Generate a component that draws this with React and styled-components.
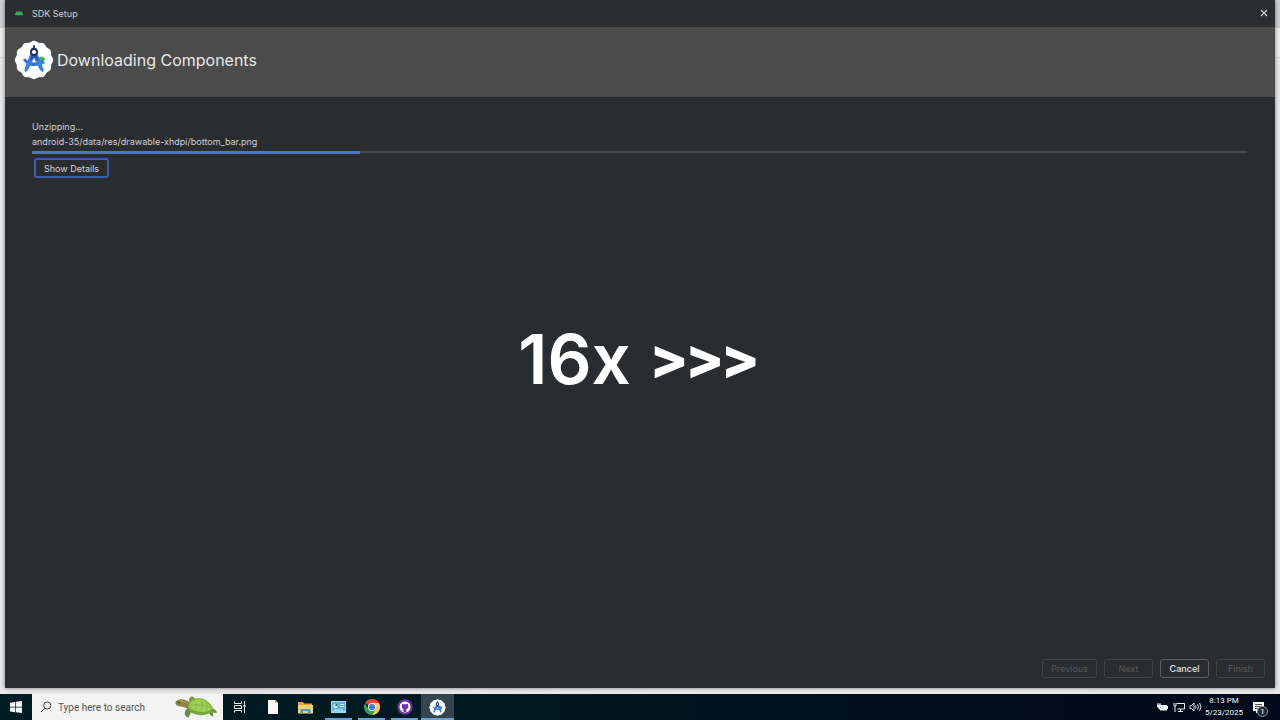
import React, { useState } from 'react';
import styled, { createGlobalStyle } from 'styled-components';

const taskbarApps = [
  { id: 'tasks', label: 'Task View', icon: <TaskViewIcon /> },
  { id: 'document', label: 'Document', icon: <DocumentIcon /> },
  { id: 'explorer', label: 'File Explorer', icon: <FolderIcon /> },
  { id: 'control', label: 'Control Panel', icon: <PanelIcon />, running: true },
  { id: 'chrome', label: 'Google Chrome', icon: <ChromeIcon />, running: true },
  { id: 'github', label: 'GitHub Desktop', icon: <GithubIcon />, running: true },
  { id: 'studio', label: 'Android Studio', icon: <StudioIcon size={17} />, running: true, active: true },
];

const App = () => {
  const [query, setQuery] = useState('');

  return (
    <>
      <GlobalStyle />
      <Desktop>
        <Workspace>
          <SetupWindow>
            <TitleBar>
              <AndroidIcon />
              <WindowTitle>SDK Setup</WindowTitle>
              <CloseButton type="button" aria-label="Close">
                <svg width="8" height="8" viewBox="0 0 8 8">
                  <path d="M1 1l6 6M7 1L1 7" stroke="#d4d6d8" strokeWidth="1.1" />
                </svg>
              </CloseButton>
            </TitleBar>

            <Header>
              <StudioIcon size={40} />
              <Heading>Downloading Components</Heading>
            </Header>

            <Content>
              <StatusText>Unzipping...</StatusText>
              <StatusText>android-35/data/res/drawable-xhdpi/bottom_bar.png</StatusText>
              <Track role="progressbar" aria-label="Download progress" aria-valuenow={27}>
                <Bar />
              </Track>
              <DetailsButton type="button">Show Details</DetailsButton>
            </Content>

            <Footer>
              <FooterButton type="button" $width={55} disabled>Previous</FooterButton>
              <FooterButton type="button" $width={49} disabled>Next</FooterButton>
              <FooterButton type="button" $width={49}>Cancel</FooterButton>
              <FooterButton type="button" $width={49} disabled>Finish</FooterButton>
            </Footer>
          </SetupWindow>

          <SpeedOverlay>
            <span>16x</span>
            <Arrows>&gt;&gt;&gt;</Arrows>
          </SpeedOverlay>
        </Workspace>

        <Taskbar>
          <StartButton type="button" aria-label="Start">
            <svg width="12" height="12" viewBox="0 0 12 12" fill="#f2f6f6">
              <path d="M0 1.7l5.3-.8v4.8H0zM6 .8L12 0v5.7H6zM0 6.4h5.3v4.8L0 10.4zM6 6.4h6V12l-6-.8z" />
            </svg>
          </StartButton>
          <SearchBox>
            <svg width="12" height="12" viewBox="0 0 12 12" fill="none" stroke="#444" strokeWidth="1">
              <circle cx="7.3" cy="4.5" r="3.6" />
              <path d="M4.7 7.2L1 11" />
            </svg>
            <SearchInput
              aria-label="Search"
              placeholder="Type here to search"
              value={query}
              onChange={(e) => setQuery(e.target.value)}
            />
            <TurtleIcon />
          </SearchBox>
          {taskbarApps.map((app) => (
            <AppButton
              key={app.id}
              type="button"
              aria-label={app.label}
              $running={app.running}
              $active={app.active}
            >
              {app.icon}
            </AppButton>
          ))}
          <Tray>
            <TrayIcons>
              <BatteryIcon />
              <NetworkIcon />
              <VolumeIcon />
            </TrayIcons>
            <Clock>
              <span>8:13 PM</span>
              <span>5/23/2025</span>
            </Clock>
            <NotificationButton type="button" aria-label="Notifications">
              <svg width="14" height="13" viewBox="0 0 14 13">
                <path d="M1 1h11v9H6.500l-2.500 2.500V10H1z" fill="#f4f6f8" />
                <path d="M3 3.500h7M3 5.500h7M3 7.500h4" stroke="#1b2733" strokeWidth=".8" />
              </svg>
              <Badge>1</Badge>
            </NotificationButton>
          </Tray>
        </Taskbar>
      </Desktop>
    </>
  );
};

export default App;

function AndroidIcon() {
  return (
    <svg width="8" height="6" viewBox="0 0 8 6">
      <path d="M0 5.200a4 3.600 0 0 1 8 0z" fill="#3fae62" />
      <path d="M1.800 2.400L.9.800M6.200 2.400l.9-1.600" stroke="#3fae62" strokeWidth=".7" />
      <circle cx="2.500" cy="3.900" r=".4" fill="#24402f" />
      <circle cx="5.500" cy="3.900" r=".4" fill="#24402f" />
    </svg>
  );
}

function StudioIcon({ size }) {
  return (
    <svg width={size} height={size} viewBox="0 0 40 40">
      <g fill="#fdfefe">
        <circle cx="20" cy="20" r="18" />
        {[0, 30, 60, 90, 120, 150, 180, 210, 240, 270, 300, 330].map((angle) => (
          <circle key={angle} cx="20" cy="5.500" r="4.700" transform={`rotate(${angle} 20 20)`} />
        ))}
      </g>
      <path d="M24 18l3.500-1.500 2 .5 1.500 2-1 2 1 2.500-6 1.500z" fill="#3fae55" />
      <path d="M9 19.500l2.500-1c2 2.500 4.500 4 8.500 4 3.500 0 6-1 8-2.500l1 3c-2.500 2-5.500 3-9 3-5 0-9-2.500-11-6.500z" fill="#3473d6" />
      <path d="M16.800 12.500h6.400L29.500 29l-.5 3.500-3-2.500-6-12-6 12-3 2.500-.5-3.500z" fill="#3d7fe4" />
      <path d="M17.500 14h5l2 7.500L20 17.500l-4.500 4z" fill="#2458ad" />
      <path d="M19 5.500h2v2.200c1.900.5 3 2 3 4.100 0 2.400-1.800 4-4 4s-4-1.600-4-4c0-2.100 1.100-3.600 3-4.100z" fill="#1b2f55" />
      <circle cx="20" cy="12" r="2.100" fill="#fff" />
    </svg>
  );
}

function TurtleIcon() {
  return (
    <svg width="43" height="24" viewBox="0 0 43 24">
      <path d="M13 13c-3 2-4 4.500-3 7 1 1.500 2.500 3 4 2.500 0-3 2-5 4-7z" fill="#6f8c3c" />
      <path d="M14 7c-.5-3.500 1-5.500 4-5.500 2 1 2 3 2 5z" fill="#7f9c42" />
      <path d="M32 16c2 1.500 3 4 5 5.500 1.500 0 1.700-2 .5-4l4 .5c1-2-1.500-4-5.500-5z" fill="#728f3e" />
      <path d="M14 7C11 5 8 4 4.500 4.500 1.500 5 0 6.500.5 8.500c.5 2 2.500 3 5.500 3 2.500 0 4 1 8 2.500z" fill="#8a8644" />
      <path d="M3 6.500c2-1 5-.5 8 1.500" stroke="#b0a85c" fill="none" />
      <circle cx="4" cy="7.500" r=".9" fill="#383c1c" />
      <path d="M13 12c0-7 6-9.500 13-8.500 6 1 10 5 13 12-5 4.500-12 5.500-18 4-4-1.200-7.500-3.500-8-7.500z" fill="#79a63c" />
      <path d="M14 11c1-5.500 6-7.500 12-6.500 5 .5 8 4 11 9.500-4 3-9 3.500-14 2.500S15 14 14 11z" fill="#a0cf58" />
      <path d="M19 5.500l2.500 4.500-2 6M26 4.500l1.500 6-1.500 6.500M32 7.500l.5 4-2 5.500M14.500 10.500l7-.5 6 .5 5 1 4 2" stroke="#7dad43" strokeWidth=".7" fill="none" />
    </svg>
  );
}

function TaskViewIcon() {
  return (
    <svg width="12" height="12" viewBox="0 0 12 12" fill="none" stroke="#e6eeee" strokeWidth="1">
      <path d="M.5.500v2h7v-2M.5 11.500v-2h7v2M.5 4.500h7v3h-7zM10.500 0v12" />
      <path d="M9.500 5h2" strokeWidth="2" />
    </svg>
  );
}

function DocumentIcon() {
  return (
    <svg width="12" height="14" viewBox="0 0 12 14">
      <path d="M1 0h7l3 3v11H1z" fill="#f7f8f8" />
      <path d="M8 0v3h3z" fill="#bcc6c8" />
    </svg>
  );
}

function FolderIcon() {
  return (
    <svg width="15" height="13" viewBox="0 0 15 13">
      <path d="M0 1h5l1.500 1.500H14V12H0z" fill="#dba83b" />
      <path d="M0 4h15v8.500H0z" fill="#f0d272" />
      <path d="M2.500 12.500V8h10v4.500H10V10H5v2.500z" fill="#5599b5" />
    </svg>
  );
}

function PanelIcon() {
  return (
    <svg width="15" height="12" viewBox="0 0 15 12">
      <path d="M0 0h15v12H0z" fill="#9cd9f2" />
      <path d="M1 1h13v9H1z" fill="#5db2dc" />
      <circle cx="4.500" cy="5" r="2.300" fill="#bfe7f7" />
      <path d="M4.500 5V2.700A2.300 2.300 0 0 1 6.800 5z" fill="#246d9f" />
      <path d="M9 3.500h4M9 5.500h4M3 9h9" stroke="#d8f3fa" />
    </svg>
  );
}

function ChromeIcon() {
  return (
    <svg width="16" height="16" viewBox="0 0 16 16">
      <path d="M8 8L1.070 4A8 8 0 0 1 14.930 4z" fill="#df4636" />
      <path d="M8 8V0a8 8 0 0 1 6.930 4z" fill="#df4636" />
      <path d="M8 4h6.930A8 8 0 0 1 8 16l3.500-6z" fill="#f8ce45" />
      <path d="M1.070 4l3.430 6L8 12l3.500-2L8 16A8 8 0 0 1 1.070 4z" fill="#37a255" />
      <circle cx="8" cy="8" r="4" fill="#fff" />
      <circle cx="8" cy="8" r="3.100" fill="#3e7fe6" />
    </svg>
  );
}

function GithubIcon() {
  return (
    <svg width="16" height="16" viewBox="0 0 16 16">
      <circle cx="8" cy="8" r="7.700" fill="#68339c" />
      <circle cx="8" cy="8" r="5.500" fill="#fff" />
      <path d="M5 4.500l1.500.8h3l1.500-.8.300 2.500c0 2-.8 2.800-2 3v3H6.800v-1.500c-1.300.3-1.500-.6-2.200-1 1 0 1.200.5 2.200.3V10c-1.300-.2-2-1-2-3z" fill="#68339c" />
    </svg>
  );
}

function BatteryIcon() {
  return (
    <svg width="12" height="10" viewBox="0 0 12 10">
      <path d="M4 3h6v1h1v3h-1v1.500H3V6l1-1z" fill="#f2f4f7" />
      <path d="M1 1v2M3 1v2M0 3h4v1.500L3 5.500H1L0 4.500zM2 5v2h2" stroke="#f2f4f7" strokeWidth=".9" fill="#f2f4f7" />
    </svg>
  );
}

function NetworkIcon() {
  return (
    <svg width="12" height="11" viewBox="0 0 12 11" fill="none" stroke="#eef0f4">
      <path d="M3.500 1.500h8v5.500h-7M7.500 7v2.500M5 9.500h5M1 1v3h2V1M2 4v6" />
    </svg>
  );
}

function VolumeIcon() {
  return (
    <svg width="13" height="12" viewBox="0 0 13 12" fill="none" stroke="#eef0f4" strokeWidth=".9">
      <path d="M1 4.500h1.500L5 2v8L2.500 7.500H1zM6.500 4.500q1.200 1.500 0 3M8.500 3.300q2 2.700 0 5.400M10.500 2q3 4 0 8" />
    </svg>
  );
}

const GlobalStyle = createGlobalStyle`
  * {
    box-sizing: border-box;
  }
  body {
    margin: 0;
    font-family: Inter, sans-serif;
  }
  button, input {
    font-family: inherit;
    padding: 0;
    border: none;
  }
  svg {
    display: block;
    flex-shrink: 0;
  }
`;

const Desktop = styled.div`
  display: flex;
  flex-direction: column;
  min-height: 100vh;
  background: linear-gradient(#cdd1d4 0 28px, #ececec 28px 57px, #dadada 57px 58px, #e9e9e9 58px);
`;

const Workspace = styled.main`
  position: relative;
  flex: 1;
  display: flex;
  padding: 0 5px 6px;
`;

const SetupWindow = styled.section`
  flex: 1;
  display: flex;
  flex-direction: column;
  background: #2a2d30;
  color: #ced0d2;
  box-shadow: 0 0 4px rgba(0, 0, 0, 0.5);
`;

const TitleBar = styled.div`
  display: flex;
  align-items: center;
  gap: 9px;
  height: 27px;
  padding: 0 7px 1px 10px;
  font-size: 9px;
  background: #2a2e31;
`;

const WindowTitle = styled.span`
  flex: 1;
`;

const CloseButton = styled.button`
  display: flex;
  padding: 0;
  background: none;
`;

const Header = styled.header`
  display: flex;
  align-items: center;
  gap: 3px;
  height: 70px;
  padding: 0 9px 4px;
  background: #4b4b4b;
`;

const Heading = styled.h1`
  margin: 0;
  font-size: 16px;
  font-weight: 400;
  color: #e6e7e8;
`;

const Content = styled.div`
  flex: 1;
  padding: 22px 28px 0 27px;
`;

const StatusText = styled.p`
  margin: 0;
  font-size: 9px;
  line-height: 15px;
`;

const Track = styled.div`
  height: 2px;
  margin: 2px 0 5px;
  background: #484a4e;
`;

const Bar = styled.div`
  width: 27%;
  height: 3px;
  background: #4d75c9;
`;

const DetailsButton = styled.button`
  display: block;
  height: 20px;
  margin-left: 2px;
  padding: 0 8px;
  border: 2px solid #3c5da8;
  border-radius: 3px;
  background: #2a2d30;
  color: #d2d4d6;
  font-size: 9px;
`;

const Footer = styled.footer`
  display: flex;
  justify-content: flex-end;
  gap: 7px;
  padding: 0 10px 10px;
`;

const FooterButton = styled.button`
  width: ${({ $width }) => $width}px;
  height: 19px;
  border: 1px solid #5c5f63;
  border-radius: 3px;
  background: none;
  color: #e4e5e7;
  font-size: 9px;
  font-weight: 500;

  &:disabled {
    border-color: #414346;
    color: #55585b;
    font-weight: 400;
  }
`;

const SpeedOverlay = styled.div`
  position: absolute;
  inset: 0;
  display: flex;
  align-items: center;
  justify-content: center;
  gap: 20px;
  padding: 24px 4px 0 0;
  color: #fff;
  font-size: 69px;
  font-weight: 600;
  pointer-events: none;
`;

const Arrows = styled.span`
  font-family: Roboto, sans-serif;
  font-weight: 700;
`;

const Taskbar = styled.nav`
  display: flex;
  height: 26px;
  background: linear-gradient(90deg, #001c21 0%, #001a20 36%, #000f1c 65%, #000a1b 100%);
  font-family: Roboto, sans-serif;
`;

const StartButton = styled.button`
  display: flex;
  align-items: center;
  justify-content: center;
  width: 32px;
  background: none;
`;

const SearchBox = styled.label`
  display: flex;
  align-items: center;
  width: 191px;
  padding: 0 5px 0 8px;
  gap: 6px;
  background: #f3f3f3;
`;

const SearchInput = styled.input`
  flex: 1;
  min-width: 0;
  background: none;
  outline: none;
  color: #333;
  font-size: 10px;

  &::placeholder {
    color: #555;
    opacity: 1;
  }
`;

const AppButton = styled.button`
  position: relative;
  display: flex;
  align-items: center;
  justify-content: center;
  width: 33px;
  background: ${({ $active }) => ($active ? '#34464c' : 'none')};

  &::after {
    content: '';
    display: ${({ $running }) => ($running ? 'block' : 'none')};
    position: absolute;
    bottom: 0;
    left: ${({ $active }) => ($active ? 0 : '3px')};
    right: ${({ $active }) => ($active ? 0 : '3px')};
    height: 2px;
    background: #6ba0d0;
  }
`;

const Tray = styled.div`
  display: flex;
  align-items: center;
  margin-left: auto;
  padding-right: 14px;
  color: #f3f4f6;
`;

const TrayIcons = styled.div`
  display: flex;
  align-items: center;
  gap: 4px;
`;

const Clock = styled.div`
  display: flex;
  flex-direction: column;
  width: 44px;
  text-align: center;
  font-size: 8px;
  line-height: 12px;
`;

const NotificationButton = styled.button`
  position: relative;
  display: flex;
  margin-left: 6px;
  background: none;
`;

const Badge = styled.span`
  position: absolute;
  left: 5px;
  top: 5px;
  width: 11px;
  height: 11px;
  border: 1px solid #8a9098;
  border-radius: 50%;
  background: #24292f;
  color: #fff;
  font-size: 8px;
  line-height: 9px;
  text-align: center;
`;
